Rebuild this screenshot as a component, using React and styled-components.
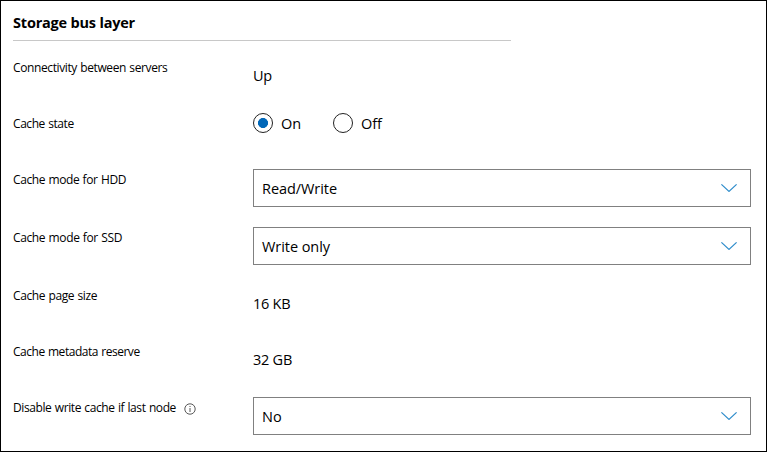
import React, { useState } from "react";
import styled, { createGlobalStyle } from "styled-components";

const GlobalStyle = createGlobalStyle`
  * { box-sizing: border-box; }
  body {
    margin: 0;
    background: #fff;
    color: #000;
    font-family: "Open Sans", "Noto Sans", sans-serif;
  }
`;

const Panel = styled.main`
  width: 767px;
  height: 452px;
  border: 1px solid #000;
  padding: 11px 15px 0 12px;
  overflow: hidden;
`;

const Heading = styled.h2`
  width: 498px;
  height: 29px;
  margin: 0 0 16px;
  border-bottom: 1px solid #c8c8c8;
  font-size: 14.5px;
  font-weight: 700;
  line-height: 21px;
  letter-spacing: -0.2px;
`;

const Row = styled.div`
  display: grid;
  grid-template-columns: 240px 498px;
  align-items: start;
  height: ${(p) => p.$height}px;
`;

const Label = styled.div`
  display: flex;
  align-items: center;
  gap: 8px;
  height: 20px;
  padding-top: 2px;
  font-size: 12px;
  line-height: 18px;
  white-space: nowrap;
  word-spacing: 0.6px;
  letter-spacing: ${(p) => p.$tracking}px;
`;

const Value = styled.div`
  padding-top: 9px;
  font-size: 14.5px;
  line-height: 20px;
  letter-spacing: -0.25px;
`;

const RadioGroup = styled.div`
  display: flex;
`;

const RadioOption = styled.label`
  display: flex;
  align-items: center;
  width: 80px;
  height: 20px;
  gap: 8px;
  font-size: 14.5px;
  line-height: 20px;
  letter-spacing: -0.1px;
`;

const OptionText = styled.span`
  padding-top: 2px;
`;

const RadioInput = styled.input`
  appearance: none;
  width: 20px;
  height: 20px;
  margin: 0;
  border: 1px solid #222;
  border-radius: 50%;
  background: #fff;
  &:checked {
    background: radial-gradient(circle, #0067b8 4.7px, transparent 5.3px);
  }
`;

const SelectBox = styled.button`
  display: flex;
  align-items: center;
  justify-content: space-between;
  width: 498px;
  height: 38px;
  padding: 0 13px 0 8px;
  border: 1px solid #808080;
  border-radius: 0;
  background: #fff;
  color: #000;
  font-family: inherit;
  font-size: 14.5px;
  line-height: 20px;
  text-align: left;
  letter-spacing: ${(p) => p.$tracking}px;
`;

const Icon = styled.svg`
  display: block;
  flex: none;
`;

const InfoIcon = styled(Icon)`
  margin-top: 1px;
`;

const Chevron = () => (
  <Icon width="16" height="8" viewBox="0 0 16 8" fill="none" stroke="#2e8ccb" strokeWidth="1.2">
    <path d="M0.4 0.4 8 7.4 15.6 0.4" />
  </Icon>
);

const Info = () => (
  <InfoIcon width="12" height="12" viewBox="0 0 12 12" fill="none" stroke="#444">
    <circle cx="6" cy="6" r="5.2" strokeWidth="0.9" />
    <path d="M6 5v4M6 3v1" strokeWidth="0.9" />
  </InfoIcon>
);

const Field = ({ label, tracking, height = 56, info, children }) => (
  <Row $height={height}>
    <Label $tracking={tracking}>
      <span>{label}</span>
      {info && <Info />}
    </Label>
    {children}
  </Row>
);

const Select = ({ tracking = -0.06, children }) => (
  <SelectBox type="button" $tracking={tracking}>
    <OptionText>{children}</OptionText>
    <Chevron />
  </SelectBox>
);

export default function App() {
  const [cache, setCache] = useState("On");
  return (
    <>
      <GlobalStyle />
      <Panel>
        <Heading>Storage bus layer</Heading>
        <Field label="Connectivity between servers" tracking={-0.39}>
          <Value>Up</Value>
        </Field>
        <Field label="Cache state" tracking={-0.43}>
          <RadioGroup>
            {["On", "Off"].map((name) => (
              <RadioOption key={name}>
                <RadioInput
                  type="radio"
                  name="cache"
                  checked={cache === name}
                  onChange={() => setCache(name)}
                />
                <OptionText>{name}</OptionText>
              </RadioOption>
            ))}
          </RadioGroup>
        </Field>
        <Field label="Cache mode for HDD" tracking={-0.39} height={58}>
          <Select>Read/Write</Select>
        </Field>
        <Field label="Cache mode for SSD" tracking={-0.37} height={58}>
          <Select>Write only</Select>
        </Field>
        <Field label="Cache page size" tracking={-0.39}>
          <Value>16 KB</Value>
        </Field>
        <Field label="Cache metadata reserve" tracking={-0.47}>
          <Value>32 GB</Value>
        </Field>
        <Field label="Disable write cache if last node" tracking={-0.4} height={38} info>
          <Select tracking={0.2}>No</Select>
        </Field>
      </Panel>
    </>
  );
}
